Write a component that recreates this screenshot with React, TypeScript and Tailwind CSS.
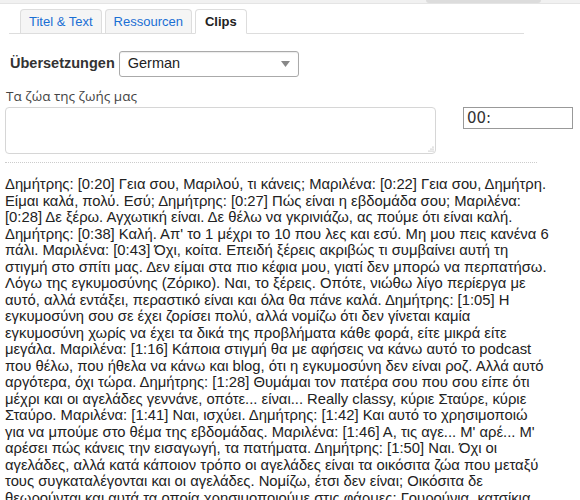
import React from 'react';

// transcript broken where the reference wraps
const lines = [
  'Δημήτρης: [0:20] Γεια σου, Μαριλού, τι κάνεις; Μαριλένα: [0:22] Γεια σου, Δημήτρη.',
  'Είμαι καλά, πολύ. Εσύ; Δημήτρης: [0:27] Πώς είναι η εβδομάδα σου; Μαριλένα:',
  '[0:28] Δε ξέρω. Αγχωτική είναι. Δε θέλω να γκρινιάζω, ας πούμε ότι είναι καλή.',
  "Δημήτρης: [0:38] Καλή. Απ' το 1 μέχρι το 10 που λες και εσύ. Μη μου πεις κανένα 6",
  'πάλι. Μαριλένα: [0:43] Όχι, κοίτα. Επειδή ξέρεις ακριβώς τι συμβαίνει αυτή τη',
  'στιγμή στο σπίτι μας. Δεν είμαι στα πιο κέφια μου, γιατί δεν μπορώ να περπατήσω.',
  'Λόγω της εγκυμοσύνης (Ζόρικο). Ναι, το ξέρεις. Οπότε, νιώθω λίγο περίεργα με',
  'αυτό, αλλά εντάξει, περαστικό είναι και όλα θα πάνε καλά. Δημήτρης: [1:05] Η',
  'εγκυμοσύνη σου σε έχει ζορίσει πολύ, αλλά νομίζω ότι δεν γίνεται καμία',
  'εγκυμοσύνη χωρίς να έχει τα δικά της προβλήματα κάθε φορά, είτε μικρά είτε',
  'μεγάλα. Μαριλένα: [1:16] Κάποια στιγμή θα με αφήσεις να κάνω αυτό το podcast',
  'που θέλω, που ήθελα να κάνω και blog, ότι η εγκυμοσύνη δεν είναι ροζ. Αλλά αυτό',
  'αργότερα, όχι τώρα. Δημήτρης: [1:28] Θυμάμαι τον πατέρα σου που σου είπε ότι',
  'μέχρι και οι αγελάδες γεννάνε, οπότε... είναι... Really classy, κύριε Σταύρε, κύριε',
  'Σταύρο. Μαριλένα: [1:41] Ναι, ισχύει. Δημήτρης: [1:42] Και αυτό το χρησιμοποιώ',
  "για να μπούμε στο θέμα της εβδομάδας. Μαριλένα: [1:46] Α, τις αγε... Μ' αρέ... Μ'",
  'αρέσει πώς κάνεις την εισαγωγή, τα πατήματα. Δημήτρης: [1:50] Ναι. Όχι οι',
  'αγελάδες, αλλά κατά κάποιον τρόπο οι αγελάδες είναι τα οικόσιτα ζώα που μεταξύ',
  'τους συγκαταλέγονται και οι αγελάδες. Νομίζω, έτσι δεν είναι; Οικόσιτα δε',
  'θεωρούνται και αυτά τα οποία χρησιμοποιούμε στις φάρμες: Γουρούνια, κατσίκια,',
];

const tabs = [
  { label: 'Titel & Text', active: false },
  { label: 'Ressourcen', active: false },
  { label: 'Clips', active: true },
];

export default function App() {
  return (
    <div className="w-[580px] h-[500px] overflow-hidden bg-white font-['Liberation_Sans',Arial,sans-serif] text-[#333]">
      {/* top strip with scrollbar */}
      <div className="h-[4px] bg-[#f1f1f1] border-b border-[#e4e4e4] relative">
        <div className="absolute left-[426px] top-0 w-[115px] h-[3px] bg-[#dcdcdc] rounded-b" />
      </div>

      {/* Tabs */}
      <div className="ml-[9px] w-[515px] mt-[1px] flex items-end gap-[3px] pl-[11px] border-b border-[#ddd] h-[29px]">
        {tabs.map((t) =>
          t.active ? (
            <div
              key={t.label}
              className="h-[25px] -mb-px px-[9px] flex items-center bg-white border border-[#ddd] border-b-white rounded-t-[4px] text-[13px] font-bold text-[#222]"
            >
              {t.label}
            </div>
          ) : (
            <div
              key={t.label}
              className="h-[24px] px-[8px] flex items-center bg-[#f5f5f5] border border-[#ddd] border-b-0 rounded-t-[4px] text-[13px] text-[#1a6fd4]"
            >
              {t.label}
            </div>
          )
        )}
      </div>

      {/* Translation selector */}
      <div className="flex items-center mt-[17px] pl-[10px] gap-[4px]">
        <span className="text-[14.5px] font-bold text-[#333]">Übersetzungen</span>
        <div className="w-[180px] h-[26px] border border-[#aaa] rounded-[3px] flex items-center justify-between pl-[8px] pr-[8px] shadow-[inset_0_1px_1px_rgba(0,0,0,0.08)]">
          <span className="text-[14.5px] text-[#222]">German</span>
          <svg width="9" height="6" viewBox="0 0 9 6">
            <path d="M0 0 L9 0 L4.5 6 Z" fill="#888" />
          </svg>
        </div>
      </div>

      {/* Title field */}
      <div className="mt-[10px] pl-[6px] text-[13.5px] leading-[18px] text-[#444] font-['Open_Sans',sans-serif]">
        Τα ζώα της ζωής μας
      </div>
      <div className="flex items-start mt-[2px] pl-[5px]">
        <div className="relative w-[431px] h-[47px] border border-[#d6d6d6] rounded-[4px]">
          <svg className="absolute right-[1px] bottom-[1px]" width="6" height="6" viewBox="0 0 6 6">
            <circle cx="5" cy="1" r="0.6" fill="#999" />
            <circle cx="5" cy="3" r="0.6" fill="#999" />
            <circle cx="3" cy="3" r="0.6" fill="#999" />
            <circle cx="5" cy="5" r="0.6" fill="#999" />
            <circle cx="3" cy="5" r="0.6" fill="#999" />
            <circle cx="1" cy="5" r="0.6" fill="#999" />
          </svg>
        </div>
        <div className="ml-[27px] w-[110px] h-[22px] border border-[#999] flex items-center pl-[3px] text-[15px] text-[#333] font-['DejaVu_Sans',sans-serif]">
          00:
        </div>
      </div>

      {/* dotted separator */}
      <div className="ml-[5px] w-[532px] mt-[8px] border-t border-dotted border-[#ccc]" />

      {/* Transcript */}
      <div className="mt-[13px] pl-[5px] text-[14.8px] leading-[16.5px] text-[#222]">
        {lines.map((l, i) => (
          <div key={i} className="whitespace-nowrap">
            {l}
          </div>
        ))}
      </div>
    </div>
  );
}
